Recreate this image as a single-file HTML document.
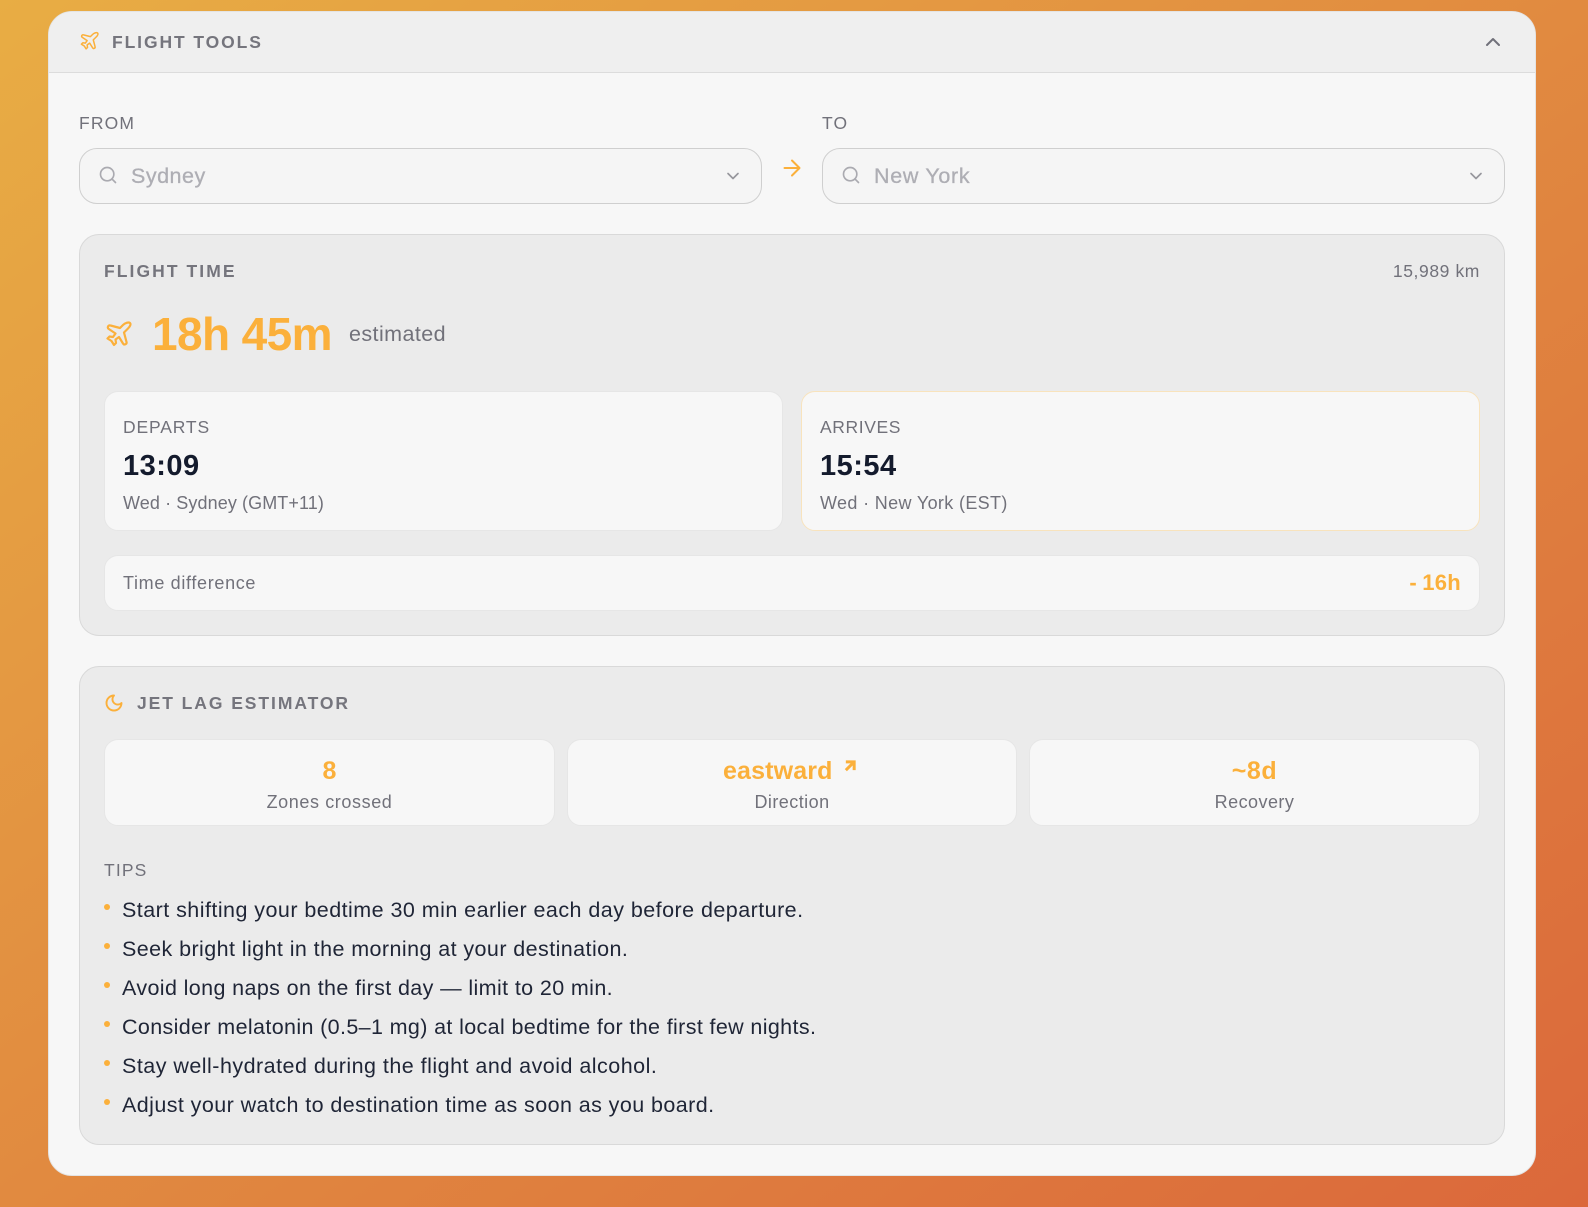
<!DOCTYPE html>
<html><head><meta charset="utf-8"><title>Flight Tools</title>
<style>
html,body{margin:0;padding:0;width:1588px;height:1207px;overflow:hidden}
body{position:relative;background:linear-gradient(to bottom right,#e8ad44 0%,#e18a40 50%,#db683b 100%);font-family:"Liberation Sans",sans-serif}
div,svg{position:absolute;box-sizing:border-box}
.t{white-space:nowrap;line-height:40px;height:40px;color:#71717a}
.o{color:#fbb03b;font-weight:700}
.b{font-weight:700}
.box{background:#f7f7f7;border:1px solid #e6e6e6;border-radius:14px}
.panel{background:#ebebeb;border:1px solid #d9d9d9;border-radius:20px;left:79px;width:1426px}
.sel{background:#f5f5f5;border:1px solid #cfcfcf;border-radius:18px;top:148px;height:56px;width:683px}
.c{text-align:center}
.tip{left:122px;font-size:21.5px;color:#1f2536}
.dot{left:104px;width:6px;height:6px;border-radius:50%;background:#fbb03b}
svg{fill:none;stroke-linecap:round;stroke-linejoin:round}
</style></head><body>
<div style="left:48px;top:11px;width:1488px;height:1165px;background:#f7f7f7;border:1px solid #e4e4e4;border-radius:24px;overflow:hidden">
<div style="left:0;top:0;width:1488px;height:61px;background:#efefef;border-bottom:1px solid #dcdcdc"></div>
</div>

<svg style="left:75.700px;top:28.400px" width="28.800" height="25.920" viewBox="0 0 40 36" stroke="#fbb03b" stroke-width="2.100"><path d="M30 7C28.500 5.800 25 7 23 9L20 12 10.500 9.500C9.500 9.200 8.500 9.600 8 10.600 7.600 11.600 8 12.500 8.800 13L15.500 17.500 13 21 9.500 20.500 7.500 22.500 11.500 25 14 29 16 27 15.500 23.500 19 21 23 27.500C23.500 28.300 24.400 28.800 25.400 28.300 26.400 27.800 26.800 27 26.500 26L24 16.500 28 12.500C30 10.500 31.200 8.200 30 7Z"/></svg>
<div class="t b" style="left:112px;top:21.500px;font-size:17.500px;letter-spacing:1.900px;color:#75757d">FLIGHT TOOLS</div>
<svg style="left:1481px;top:30px" width="24" height="24" viewBox="0 0 24 24" stroke="#71717a" stroke-width="2"><path d="m18 15-6-6-6 6"/></svg>

<div class="t" style="left:79px;top:103px;font-size:17.500px;letter-spacing:1.150px">FROM</div>
<div class="t" style="left:822px;top:103px;font-size:17.500px;letter-spacing:1.150px">TO</div>

<div class="sel" style="left:79px"></div>
<svg style="left:98px;top:165px" width="20" height="20" viewBox="0 0 24 24" stroke="#aaaab0" stroke-width="2"><circle cx="11" cy="11" r="8"/><path d="m21 21-4.300-4.300"/></svg>
<div class="t" style="left:131px;top:156px;font-size:21.500px;color:#aeaeb4;letter-spacing:.5px;-webkit-text-stroke:.3px #aeaeb4">Sydney</div>
<svg style="left:723px;top:165.500px" width="20" height="20" viewBox="0 0 24 24" stroke="#96969c" stroke-width="2"><path d="m6 9 6 6 6-6"/></svg>

<svg style="left:780px;top:156px" width="24" height="24" viewBox="0 0 24 24" stroke="#fbb03b" stroke-width="2"><path d="M4.500 12H19.500M12 4.500 19.500 12 12 19.500"/></svg>

<div class="sel" style="left:822px"></div>
<svg style="left:841px;top:165px" width="20" height="20" viewBox="0 0 24 24" stroke="#aaaab0" stroke-width="2"><circle cx="11" cy="11" r="8"/><path d="m21 21-4.300-4.300"/></svg>
<div class="t" style="left:874px;top:156px;font-size:21.500px;color:#aeaeb4;letter-spacing:.68px;-webkit-text-stroke:.3px #aeaeb4">New York</div>
<svg style="left:1466px;top:165.500px" width="20" height="20" viewBox="0 0 24 24" stroke="#96969c" stroke-width="2"><path d="m6 9 6 6 6-6"/></svg>

<div class="panel" style="top:234px;height:402px"></div>
<div class="t b" style="left:104px;top:250.500px;font-size:17.500px;letter-spacing:2.070px;color:#75757d">FLIGHT TIME</div>
<div class="t" style="right:108px;top:250.500px;font-size:17.500px;letter-spacing:.6px">15,989 km</div>
<svg style="left:100px;top:316px" width="40" height="36" viewBox="0 0 40 36" stroke="#fbb03b" stroke-width="2.200"><path d="M30 7C28.500 5.800 25 7 23 9L20 12 10.500 9.500C9.500 9.200 8.500 9.600 8 10.600 7.600 11.600 8 12.500 8.800 13L15.500 17.500 13 21 9.500 20.500 7.500 22.500 11.500 25 14 29 16 27 15.500 23.500 19 21 23 27.500C23.500 28.300 24.400 28.800 25.400 28.300 26.400 27.800 26.800 27 26.500 26L24 16.500 28 12.500C30 10.500 31.200 8.200 30 7Z"/></svg>
<div class="t o" style="left:152px;top:314px;font-size:46px;letter-spacing:-.6px">18h 45m</div>
<div class="t" style="left:349px;top:314px;font-size:21.500px;letter-spacing:.42px">estimated</div>

<div class="box" style="left:104px;top:391px;width:679px;height:140px"></div>
<div class="t" style="left:123px;top:407px;font-size:17.500px;letter-spacing:.85px">DEPARTS</div>
<div class="t b" style="left:123px;top:446px;font-size:29px;color:#141b2d;letter-spacing:.5px">13:09</div>
<div class="t" style="left:123px;top:483px;font-size:18px;letter-spacing:.1px">Wed · Sydney (GMT+11)</div>

<div class="box" style="left:801px;top:391px;width:679px;height:140px;border-color:#f8e3bd"></div>
<div class="t" style="left:820px;top:407px;font-size:17.500px;letter-spacing:.6px">ARRIVES</div>
<div class="t b" style="left:820px;top:446px;font-size:29px;color:#141b2d;letter-spacing:.5px">15:54</div>
<div class="t" style="left:820px;top:483px;font-size:18px;letter-spacing:.35px">Wed · New York (EST)</div>

<div class="box" style="left:104px;top:555px;width:1376px;height:56px"></div>
<div class="t" style="left:123px;top:563px;font-size:18px;letter-spacing:.67px">Time difference</div>
<div class="t o" style="right:127px;top:562.500px;font-size:22px;letter-spacing:.3px"><span style="letter-spacing:5.500px">-</span>16h</div>

<div class="panel" style="top:666px;height:479px"></div>
<svg style="left:104px;top:692.500px" width="20" height="20" viewBox="0 0 24 24" stroke="#fbb03b" stroke-width="2.300"><path d="M12 3a6 6 0 0 0 9 9 9 9 0 1 1-9-9Z"/></svg>
<div class="t b" style="left:137px;top:683px;font-size:17.500px;letter-spacing:1.930px;color:#75757d">JET LAG ESTIMATOR</div>

<div class="box" style="left:104px;top:739px;width:451px;height:87px"></div>
<div class="t o c" style="left:104px;width:451px;top:750.500px;font-size:25px">8</div>
<div class="t c" style="left:104px;width:451px;top:782px;font-size:18px;letter-spacing:.6px">Zones crossed</div>

<div class="box" style="left:567px;top:739px;width:450px;height:87px"></div>
<div class="t o" style="left:723px;top:750.500px;font-size:25px;letter-spacing:.15px">eastward</div>
<svg style="left:840px;top:755.500px" width="20" height="20" viewBox="0 0 24 24" stroke="#fbb03b" stroke-width="3.600"><path d="M7 7h10v10M7 17 17 7" stroke-linecap="butt" stroke-linejoin="miter"/></svg>
<div class="t c" style="left:567px;width:450px;top:782px;font-size:18px;letter-spacing:.45px">Direction</div>

<div class="box" style="left:1029px;top:739px;width:451px;height:87px"></div>
<div class="t o c" style="left:1029px;width:451px;top:750.500px;font-size:25px;letter-spacing:.6px">~8d</div>
<div class="t c" style="left:1029px;width:451px;top:782px;font-size:18px;letter-spacing:.45px">Recovery</div>

<div class="t" style="left:104px;top:850px;font-size:17.500px;letter-spacing:1.150px">TIPS</div>
<div class="dot" style="top:904px"></div><div class="t tip" style="top:890px;letter-spacing:.455px">Start shifting your bedtime 30 min earlier each day before departure.</div>
<div class="dot" style="top:943px"></div><div class="t tip" style="top:929px;letter-spacing:.42px">Seek bright light in the morning at your destination.</div>
<div class="dot" style="top:982px"></div><div class="t tip" style="top:968px;letter-spacing:.38px">Avoid long naps on the first day — limit to 20 min.</div>
<div class="dot" style="top:1021px"></div><div class="t tip" style="top:1007px;letter-spacing:.365px">Consider melatonin (0.5–1 mg) at local bedtime for the first few nights.</div>
<div class="dot" style="top:1060px"></div><div class="t tip" style="top:1046px;letter-spacing:.475px">Stay well-hydrated during the flight and avoid alcohol.</div>
<div class="dot" style="top:1099px"></div><div class="t tip" style="top:1085px;letter-spacing:.42px">Adjust your watch to destination time as soon as you board.</div>
</body></html>
